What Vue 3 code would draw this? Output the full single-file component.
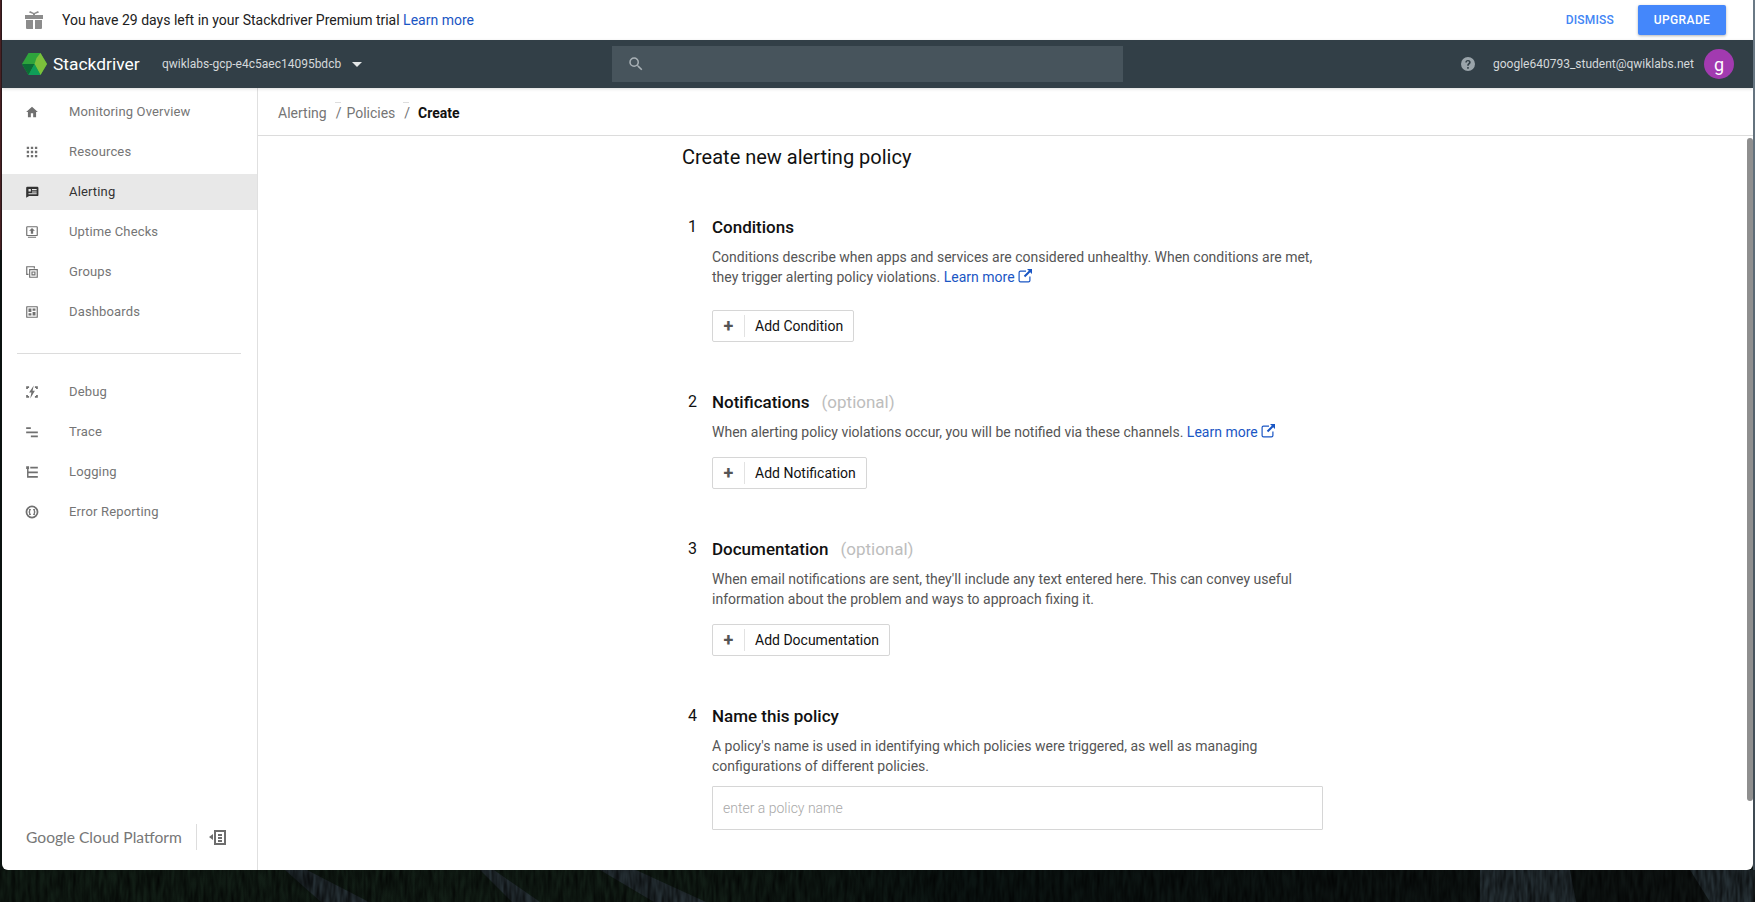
<script setup>
const mainNav = [
  { label: 'Monitoring Overview', d: 'M10 21v-7h4v7h5v-9h3L12 3 2 12h3v9z' },
  { label: 'Resources', d: 'M3 3h4v4H3zM10 3h4v4h-4zM17 3h4v4h-4zM3 10h4v4H3zM10 10h4v4h-4zM17 10h4v4h-4zM3 17h4v4H3zM10 17h4v4h-4zM17 17h4v4h-4z' },
  { label: 'Alerting', active: true, d: 'M4 3h17a2 2 0 0 1 2 2v12a2 2 0 0 1-2 2H7l-5 3V5a2 2 0 0 1 2-2zm2 4v4h4V7zm6 0v2h8V7zm0 4v2h8v-2zm-6 3v2h14v-2z' },
  { label: 'Uptime Checks', d: 'M4 2h16a2 2 0 0 1 2 2v13a2 2 0 0 1-2 2H4a2 2 0 0 1-2-2V4a2 2 0 0 1 2-2zm0 2v13h16V4zm8 1 5 5h-3v5h-4v-5H7zM5 20h14v2H5z' },
  { label: 'Groups', d: 'M2 2h15v4h-2V4H4v11h2v2H2zM7 7h15v15H7zm2 2v11h11V9zm2 2h7v7h-7zm2 2v3h3v-3z' },
  { label: 'Dashboards', d: 'M3 2h18a1 1 0 0 1 1 1v18a1 1 0 0 1-1 1H3a1 1 0 0 1-1-1V3a1 1 0 0 1 1-1zm1 2v16h16V4zm2 2h5v6H6zm7 0h5v4h-5zm-7 8h5v4H6zm7-2h5v6h-5z' },
]
const toolNav = [
  { label: 'Debug', d: 'M2 2h5v3H5v2H2zM17 2h5v5h-3V5h-2zM2 17h3v2h2v3H2zM19 17h3v5h-5v-3h2zM15 1 7 13h4l-2 10 8-13h-4z' },
  { label: 'Trace', d: 'M2 4h8v3H2zM2 11h20v3H2zM10 18h12v3H10z' },
  { label: 'Logging', d: 'M2 2h5v5H2zM3.500 7H6v12h3v3H3.500zM9 3h13v3H9zM9 11h13v3H9zM9 19h13v3H9zM6 11h3v3H6z' },
  { label: 'Error Reporting', d: 'M12 1a11 11 0 1 1 0 22 11 11 0 0 1 0-22zm0 3a8 8 0 1 0 0 16 8 8 0 0 0 0-16zM10 7v2H9v2l-1 1 1 1v2h1v2H7v-3l-1-2 1-2V7zm4 0h3v3l1 2-1 2v3h-3v-2h1v-2l1-1-1-1V9h-1z' },
]
</script>

<template>
  <div class="desktop">
    <svg class="forest" viewBox="0 0 1755 32" width="1755" height="32" preserveAspectRatio="none">
      <defs>
        <filter id="streaks" x="0" y="0" width="100%" height="100%">
          <feTurbulence type="fractalNoise" baseFrequency="0.25 0.05" numOctaves="2" seed="4" />
          <feColorMatrix values="0 0 0 0 0  0 0 0 0 0  0 0 0 0 0  1.2 0 0 0 -.3" />
        </filter>
        <linearGradient id="tint" x1="0" x2="1" y1="0" y2="0">
          <stop offset="0" stop-color="#111d15" />
          <stop offset=".38" stop-color="#121e16" />
          <stop offset=".55" stop-color="#0b1412" />
          <stop offset="1" stop-color="#0f1413" />
        </linearGradient>
      </defs>
      <rect width="1755" height="32" fill="url(#tint)" />
      <path d="M285 0h22l62 32h-48zM480 0h14l46 32h-28zM600 0h36l70 32h-52zM1480 0h90l6 32h-96zM1690 0h65v32h-45z" fill="#252f34" />
      <rect width="1755" height="32" filter="url(#streaks)" />
    </svg>
    <div class="window">
      <div class="trial-bar">
        <svg class="gift" viewBox="0 0 18 18" width="18" height="18">
          <path d="M0 4h8V3L4 1.500 5 0l4 2 4-2 1 1.500L10 3v1h8v4H0zM1 9h7v9H2a1 1 0 0 1-1-1zM10 9h7v8a1 1 0 0 1-1 1h-6z" />
        </svg>
        <span class="trial-text">You have 29 days left in your Stackdriver Premium trial <a class="link">Learn more</a></span>
        <span class="dismiss">DISMISS</span>
        <button type="button" class="upgrade">UPGRADE</button>
      </div>

      <header class="topbar">
        <svg class="logo" viewBox="0 0 25 22" width="25" height="22">
          <path d="M6.500 0h12L25 11l-6.500 11h-12L0 11z" fill="#2ea43c" />
          <path d="M18.500 0 25 11l-6.500 11-6-11 2-6z" fill="#7cc03b" />
          <path d="M0 11h12.500L6.500 22z" fill="#0c6b35" />
          <path d="M12.500 11l6 11h-12z" fill="#0f9d58" />
        </svg>
        <span class="brand">Stackdriver</span>
        <span class="project">qwiklabs-gcp-e4c5aec14095bdcb</span>
        <span class="caret"></span>
        <div class="search">
          <svg viewBox="0 0 24 24" width="18" height="18"><path d="M15.500 14h-.79l-.28-.27A6.470 6.470 0 0 0 16 9.500 6.500 6.500 0 1 0 9.500 16c1.610 0 3.090-.59 4.230-1.570l.27.28v.79l5 4.990L20.490 19l-4.990-5zm-6 0C7.010 14 5 11.990 5 9.500S7.010 5 9.500 5 14 7.010 14 9.500 11.990 14 9.500 14z" /></svg>
        </div>
        <svg class="help" viewBox="0 0 24 24" width="14" height="14">
          <path d="M12 0a12 12 0 1 0 0 24 12 12 0 0 0 0-24zm1.300 20h-2.700v-2.700h2.700zm2.700-9c-.9 1.200-2.400 1.600-2.700 4h-2.700c0-3.300 1.900-4 2.800-5 .8-.9.400-2.600-1.400-2.600-1.200 0-2 .9-2.100 2.100H7.300A4.700 4.700 0 0 1 12 5c4 0 5.700 3.300 4 6z" />
        </svg>
        <span class="email">google640793_student@qwiklabs.net</span>
        <span class="avatar">g</span>
      </header>

      <div class="body">
        <aside class="sidebar">
          <nav class="nav">
            <a v-for="item in mainNav" :key="item.label" class="nav-item" :class="{ 'nav-item--active': item.active }">
              <svg viewBox="0 0 24 24" width="14" height="14"><path :d="item.d" fill-rule="evenodd" /></svg>
              <span>{{ item.label }}</span>
            </a>
            <div class="nav-divider"></div>
            <a v-for="item in toolNav" :key="item.label" class="nav-item">
              <svg viewBox="0 0 24 24" width="14" height="14"><path :d="item.d" fill-rule="evenodd" /></svg>
              <span>{{ item.label }}</span>
            </a>
          </nav>
          <div class="sidebar-foot">
            <span class="gcp">Google Cloud Platform</span>
            <span class="foot-divider"></span>
            <svg viewBox="0 0 17 16" width="17" height="16">
              <path d="M5 1h12v15H5zm2 2v11h8V3zm2 2h4v2H9zm0 3h4v2H9zm0 3h4v2H9zM4 5v6L0 8z" fill-rule="evenodd" />
            </svg>
          </div>
        </aside>

        <div class="page">
          <div class="crumbs">
            <a>Alerting</a>
            <span class="sep">/</span>
            <a>Policies</a>
            <span class="sep sep--last">/</span>
            <strong>Create</strong>
          </div>
          <div class="scroller">
            <main class="form">
              <h1>Create new alerting policy</h1>

              <section class="step step--one">
                <h2><span class="num">1</span>Conditions</h2>
                <p>Conditions describe when apps and services are considered unhealthy. When conditions are met, they trigger alerting policy violations. <a class="link">Learn more<svg class="ext" viewBox="0 0 14 14" width="14" height="14"><path d="M8 1.500H2.500a2 2 0 0 0-2 2v8a2 2 0 0 0 2 2h8a2 2 0 0 0 2-2V7.500h-1.200v4a.8.8 0 0 1-.8.8h-8a.8.8 0 0 1-.8-.8v-8a.8.8 0 0 1 .8-.8H8zM9 0h5v5l-1.800-1.800-5 5-1.400-1.400 5-5z" /></svg></a></p>
                <button type="button" class="add"><span class="plus">+</span><span class="add-label">Add Condition</span></button>
              </section>

              <section class="step step--two">
                <h2><span class="num">2</span>Notifications<em>(optional)</em></h2>
                <p>When alerting policy violations occur, you will be notified via these channels. <a class="link">Learn more<svg class="ext" viewBox="0 0 14 14" width="14" height="14"><path d="M8 1.500H2.500a2 2 0 0 0-2 2v8a2 2 0 0 0 2 2h8a2 2 0 0 0 2-2V7.500h-1.200v4a.8.8 0 0 1-.8.8h-8a.8.8 0 0 1-.8-.8v-8a.8.8 0 0 1 .8-.8H8zM9 0h5v5l-1.800-1.800-5 5-1.400-1.400 5-5z" /></svg></a></p>
                <button type="button" class="add"><span class="plus">+</span><span class="add-label">Add Notification</span></button>
              </section>

              <section class="step step--three">
                <h2><span class="num">3</span>Documentation<em>(optional)</em></h2>
                <p>When email notifications are sent, they'll include any text entered here. This can convey useful information about the problem and ways to approach fixing it.</p>
                <button type="button" class="add"><span class="plus">+</span><span class="add-label">Add Documentation</span></button>
              </section>

              <section class="step step--four">
                <h2><span class="num">4</span>Name this policy</h2>
                <p>A policy's name is used in identifying which policies were triggered, as well as managing configurations of different policies.</p>
                <input class="name-input" type="text" placeholder="enter a policy name" />
              </section>
            </main>
            <div class="scrollbar"><span></span></div>
          </div>
        </div>
      </div>
    </div>
  </div>
</template>

<style>
html, body {
  margin: 0;
  overflow: hidden;
}
</style>

<style scoped>
.desktop {
  height: 902px;
  padding-left: 2px;
  box-sizing: border-box;
  position: relative;
  font-family: Roboto, "Liberation Sans", sans-serif;
  background:
    linear-gradient(90deg, rgba(120, 45, 50, .7) 0, rgba(50, 20, 30, .4) 2px, transparent 3px) 0 0 / 100% 250px no-repeat,
    linear-gradient(180deg, #6b7a86 0, #3c4750 100%) 1753px 0 / 2px 870px no-repeat,
    #0b1210;
}
.forest {
  position: absolute;
  left: 0;
  bottom: 0;
}
.window {
  width: 1751px;
  height: 870px;
  display: flex;
  flex-direction: column;
  position: relative;
  background: #fff;
  border-radius: 0 0 6px 6px;
  overflow: hidden;
}
.trial-bar {
  height: 40px;
  flex: none;
  display: flex;
  align-items: center;
  padding-left: 23px;
  padding-right: 27px;
  font-size: 14px;
  color: #212121;
}
.gift {
  fill: #8c8c8c;
  margin-right: 19px;
}
.trial-text {
  flex: 1;
}
.link {
  color: #1a56c4;
}
.dismiss {
  font-size: 12px;
  font-weight: 500;
  color: #4285f4;
  letter-spacing: .2px;
  margin-right: 24px;
}
.upgrade {
  width: 88px;
  height: 30px;
  border: 0;
  border-radius: 2px;
  background: #4487fb;
  color: #fff;
  font: 500 12px Roboto, sans-serif;
  letter-spacing: .4px;
  box-shadow: 0 1px 3px rgba(0, 0, 0, .3);
}
.topbar {
  height: 48px;
  flex: none;
  display: flex;
  align-items: center;
  background: #323f47;
  padding-left: 20px;
  padding-right: 19px;
  color: #d5d9db;
  position: relative;
  z-index: 1;
  box-shadow: 0 1px 3px rgba(0, 0, 0, .15);
}
.logo {
  flex: none;
}
.brand {
  font-size: 17.4px;
  color: #fff;
  margin-left: 6px;
  width: 109px;
  flex: none;
}
.project {
  font-size: 12px;
  width: 190px;
  flex: none;
  white-space: nowrap;
}
.caret {
  flex: none;
  width: 0;
  height: 0;
  border: 5px solid transparent;
  border-top-color: #e4e7e8;
  border-bottom: 0;
  margin-right: 250px;
}
.search {
  width: 511px;
  height: 36px;
  flex: none;
  background: #47545c;
  display: flex;
  align-items: center;
  padding-left: 15px;
  box-sizing: border-box;
  margin-right: 338px;
}
.search svg {
  fill: #a9b1b6;
}
.help {
  flex: none;
  fill: #9aa4aa;
  margin-right: 18px;
}
.email {
  font-size: 12px;
  flex: 1;
  white-space: nowrap;
}
.avatar {
  width: 30px;
  height: 30px;
  flex: none;
  border-radius: 50%;
  background: #a23ab0;
  color: #fff;
  font-size: 18px;
  display: flex;
  align-items: center;
  justify-content: center;
}
.body {
  flex: 1;
  min-height: 0;
  display: flex;
}
.sidebar {
  width: 255px;
  flex: none;
  border-right: 1px solid #e0e0e0;
  display: flex;
  flex-direction: column;
  justify-content: space-between;
}
.nav {
  padding-top: 6px;
  display: flex;
  flex-direction: column;
  gap: 4px;
}
.nav-item {
  height: 36px;
  display: flex;
  align-items: center;
  gap: 30px;
  padding-left: 23px;
  font-size: 13px;
  letter-spacing: .15px;
  color: #757575;
}
.nav-item span {
  margin-top: -2px;
}
.nav-item svg {
  fill: #707070;
}
.nav-item--active {
  background: #e8e8e8;
  color: #333;
}
.nav-item--active svg {
  fill: #333;
}
.nav-divider {
  height: 1px;
  background: #dcdcdc;
  margin: 19px 16px 16px 15px;
}
.sidebar-foot {
  display: flex;
  align-items: center;
  height: 26px;
  padding-left: 24px;
  margin-bottom: 20px;
}
.sidebar-foot svg {
  fill: #6d6d6d;
}
.gcp {
  font-family: Lato, Roboto, sans-serif;
  font-size: 15.6px;
  color: #777;
  width: 170px;
  white-space: nowrap;
}
.foot-divider {
  width: 1px;
  height: 26px;
  background: #ddd;
  margin-right: 12px;
}
.page {
  flex: 1;
  min-width: 0;
  display: flex;
  flex-direction: column;
}
.crumbs {
  height: 48px;
  flex: none;
  box-sizing: border-box;
  border-bottom: 1px solid #dcdcdc;
  display: flex;
  align-items: center;
  padding: 3px 0 0 20px;
  font-size: 14px;
  color: #757575;
}
.crumbs strong {
  font-weight: 700;
  color: #111;
}
.sep {
  margin: 0 5px 0 9px;
  position: relative;
}
.sep--last {
  margin-right: 8px;
}
.sep::before {
  content: "";
  position: absolute;
  left: -1px;
  top: -3px;
  width: 6px;
  height: 1px;
  background: #ddd;
}
.scroller {
  flex: 1;
  min-height: 0;
  display: flex;
}
.form {
  flex: 1;
  min-width: 0;
  padding: 0 calc((100% - 647px) / 2);
  box-sizing: border-box;
}
h1 {
  margin: 8px 0 0;
  font-size: 20px;
  line-height: 26px;
  font-weight: 400;
  color: #111;
}
.step {
  padding-left: 30px;
}
.step--one { margin-top: 46px; }
.step--two { margin-top: 49px; }
.step--three { margin-top: 49px; }
.step--four { margin-top: 49px; }
h2 {
  margin: 0;
  font-size: 17px;
  line-height: 22px;
  font-weight: 500;
  color: #111;
  position: relative;
}
.num {
  position: absolute;
  left: -24px;
  font-size: 16px;
  font-weight: 400;
}
h2 em {
  font-style: normal;
  font-weight: 400;
  color: #bdbdbd;
  margin-left: 12px;
}
p {
  margin: 9px 0 0;
  font-size: 14px;
  line-height: 20px;
  color: #555;
}
.ext {
  fill: #1a56c4;
  margin-left: 3px;
  vertical-align: -1px;
}
.add {
  display: flex;
  align-items: center;
  height: 32px;
  margin-top: 23px;
  padding: 0;
  background: #fff;
  border: 1px solid #d6d6d6;
  border-radius: 2px;
  font: 14px Roboto, sans-serif;
  color: #111;
}
.step--two .add,
.step--three .add {
  margin-top: 15px;
}
.plus {
  width: 31px;
  font-size: 18px;
  font-weight: 700;
  color: #555;
  border-right: 1px solid #e2e2e2;
  line-height: 22px;
}
.add-label {
  padding: 0 10px;
}
.name-input {
  display: block;
  width: 100%;
  height: 44px;
  margin-top: 10px;
  box-sizing: border-box;
  border: 1px solid #d6d6d6;
  border-radius: 1px;
  padding: 0 10px;
  font: 300 14px Roboto, sans-serif;
  outline: none;
}
.name-input::placeholder {
  color: #a8a8a8;
}
.scrollbar {
  width: 6px;
  flex: none;
}
.scrollbar span {
  display: block;
  width: 6px;
  height: 663px;
  margin-top: 2px;
  background: #8f8f8f;
  border-radius: 3px;
}
</style>
